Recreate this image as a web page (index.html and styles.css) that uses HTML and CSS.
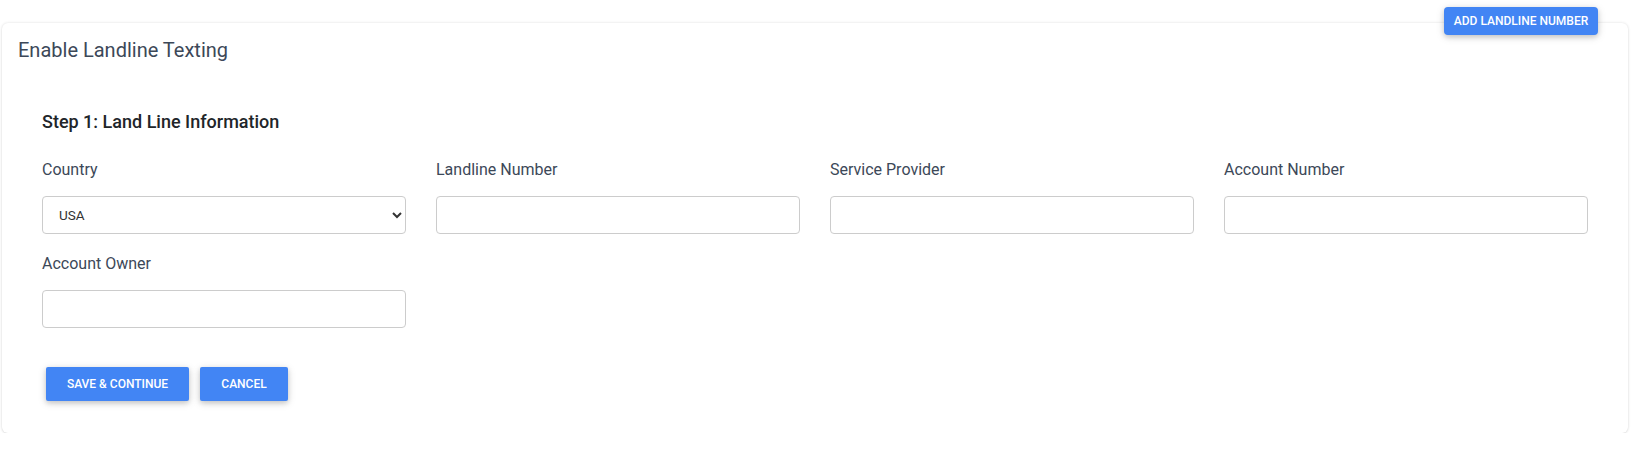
FILE: index.html
```html
<!DOCTYPE html>
<html>
<head>
<meta charset="utf-8">
<link rel="stylesheet" href="styles.css">
</head>
<body>
<div class="page">
  <button class="btn btn-add">Add Landline Number</button>
  <div class="card">
    <div class="card-header">
      <h2 class="card-title">Enable Landline Texting</h2>
    </div>
    <div class="card-body">
      <h3 class="step-title">Step 1: Land Line Information</h3>
      <div class="fields">
        <div class="field">
          <label class="field-label">Country</label>
          <select class="control select"><option>USA</option></select>
        </div>
        <div class="field">
          <label class="field-label">Landline Number</label>
          <input class="control" type="text">
        </div>
        <div class="field">
          <label class="field-label">Service Provider</label>
          <input class="control" type="text">
        </div>
        <div class="field">
          <label class="field-label">Account Number</label>
          <input class="control" type="text">
        </div>
        <div class="field">
          <label class="field-label">Account Owner</label>
          <input class="control" type="text">
        </div>
      </div>
      <div class="actions">
        <button class="btn btn-action">Save &amp; Continue</button>
        <button class="btn btn-action btn-cancel">Cancel</button>
      </div>
    </div>
  </div>
</div>
</body>
</html>
```

FILE: styles.css
```css
* { box-sizing: border-box; }
html, body { margin: 0; padding: 0; background: #fff; }
body { font-family: Roboto, "Liberation Sans", Arial, sans-serif; }

.page {
  position: relative;
  padding: 23px 4px 0 2px;
}

.btn {
  font-family: Roboto, "Liberation Sans", Arial, sans-serif;
  font-weight: 500;
  font-size: 12px;
  text-transform: uppercase;
  color: #fff;
  background: #4285f4;
  border: 0;
  cursor: pointer;
  box-shadow: 0 2px 5px 0 rgba(0,0,0,.16), 0 2px 10px 0 rgba(0,0,0,.12);
}

.btn-add {
  position: absolute;
  top: 7px;
  right: 34px;
  width: 154px;
  height: 28px;
  padding: 0;
  border-radius: 4px;
  z-index: 2;
}

.card {
  background: #fff;
  border-radius: 6px;
  box-shadow: 0 0 3px rgba(0,0,0,.12), 0 1px 2px rgba(0,0,0,.08);
}

.card-header {
  padding: 15px 15px 0 16px;
}

.card-title {
  margin: 0;
  font-size: 20px;
  font-weight: 400;
  line-height: 24px;
  color: #3c4858;
}

.card-body {
  padding: 49px 40px 32px 40px;
}

.step-title {
  margin: 0 0 28px 0;
  font-size: 18px;
  font-weight: 500;
  line-height: 21px;
  color: #212529;
}

.fields {
  display: grid;
  grid-template-columns: repeat(4, 1fr);
  column-gap: 30px;
  row-gap: 20px;
}

.field {
  display: flex;
  flex-direction: column;
}

.field-label {
  font-size: 16px;
  line-height: 19px;
  color: #3c4858;
  margin-bottom: 17px;
}

.control {
  height: 38px;
  width: 100%;
  border: 1px solid #ccc;
  border-radius: 4px;
  background: #fff;
  padding: 0 12px;
  font-family: Roboto, "Liberation Sans", Arial, sans-serif;
  font-size: 13.5px;
  color: #333;
  outline: none;
}

.select {
  padding: 0 8px 0 12px;
}

.actions {
  display: flex;
  gap: 11px;
  margin-top: 39px;
  padding-left: 4px;
}

.btn-action {
  height: 34px;
  width: 143px;
  border-radius: 2px;
  padding: 0;
}

.btn-cancel {
  width: 88px;
}
```
